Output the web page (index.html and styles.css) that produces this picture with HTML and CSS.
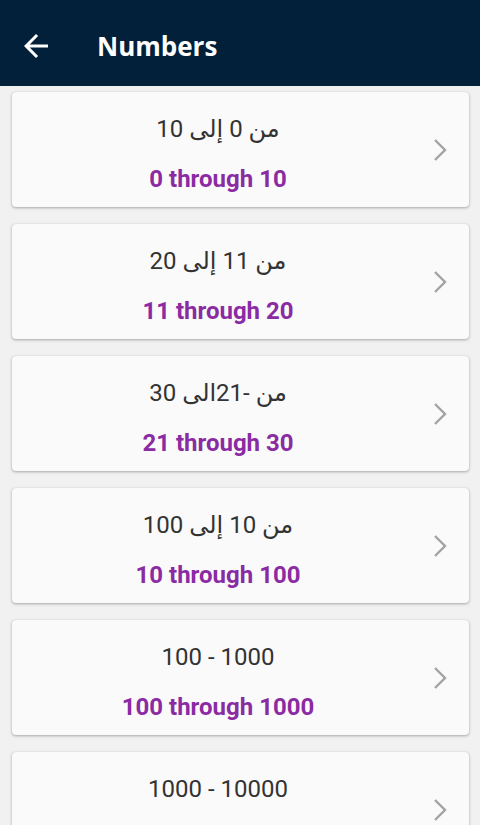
FILE: index.html
```html
<!DOCTYPE html>
<html lang="en">
<head>
  <meta charset="UTF-8">
  <meta name="viewport" content="width=device-width, initial-scale=1.0">
  <title>Numbers</title>
  <link rel="stylesheet" href="styles.css">
</head>
<body>
  <header class="app-bar">
    <svg class="back" width="36" height="36" viewBox="0 0 24 24">
      <path d="M20 11H7.83l5.59-5.59L12 4l-8 8 8 8 1.41-1.41L7.83 13H20v-2z" fill="#fff"/>
    </svg>
    <div class="app-title">Numbers</div>
  </header>

  <div class="list">
    <div class="card">
      <div class="card-text">
        <div class="native" dir="rtl">من 0 إلى 10</div>
        <div class="english">0 through 10</div>
      </div>
      <svg class="chevron" width="16" height="24" viewBox="0 0 16 24"><path d="M3 2l10 10-10 10" fill="none" stroke="#a2a2a2" stroke-width="2.4"/></svg>
    </div>

    <div class="card">
      <div class="card-text">
        <div class="native" dir="rtl">من 11 إلى 20</div>
        <div class="english">11 through 20</div>
      </div>
      <svg class="chevron" width="16" height="24" viewBox="0 0 16 24"><path d="M3 2l10 10-10 10" fill="none" stroke="#a2a2a2" stroke-width="2.4"/></svg>
    </div>

    <div class="card">
      <div class="card-text">
        <div class="native" dir="rtl">من -21الى 30</div>
        <div class="english">21 through 30</div>
      </div>
      <svg class="chevron" width="16" height="24" viewBox="0 0 16 24"><path d="M3 2l10 10-10 10" fill="none" stroke="#a2a2a2" stroke-width="2.4"/></svg>
    </div>

    <div class="card">
      <div class="card-text">
        <div class="native" dir="rtl">من 10 إلى 100</div>
        <div class="english">10 through 100</div>
      </div>
      <svg class="chevron" width="16" height="24" viewBox="0 0 16 24"><path d="M3 2l10 10-10 10" fill="none" stroke="#a2a2a2" stroke-width="2.4"/></svg>
    </div>

    <div class="card">
      <div class="card-text">
        <div class="native">100 - 1000</div>
        <div class="english">100 through 1000</div>
      </div>
      <svg class="chevron" width="16" height="24" viewBox="0 0 16 24"><path d="M3 2l10 10-10 10" fill="none" stroke="#a2a2a2" stroke-width="2.4"/></svg>
    </div>

    <div class="card">
      <div class="card-text">
        <div class="native">1000 - 10000</div>
        <div class="english">1000 through 10000</div>
      </div>
      <svg class="chevron" width="16" height="24" viewBox="0 0 16 24"><path d="M3 2l10 10-10 10" fill="none" stroke="#a2a2a2" stroke-width="2.4"/></svg>
    </div>
  </div>
</body>
</html>
```

FILE: styles.css
```css
body {
  margin: 0;
  font-family: Roboto, "DejaVu Sans", sans-serif;
  background: #f1f1f1;
  overflow: hidden;
}

.app-bar {
  height: 86px;
  background: #03203a;
  display: flex;
  align-items: center;
  padding: 6px 0 0 18px;
  box-sizing: border-box;
}

.back {
  width: 36px;
  height: 36px;
}

.app-title {
  color: #fff;
  font-family: "Open Sans", Roboto, sans-serif;
  font-weight: 700;
  font-size: 26px;
  margin-left: 43px;
}

.list {
  padding: 6px 11px 0 12px;
  display: flex;
  flex-direction: column;
  gap: 17px;
}

.card {
  height: 115px;
  box-sizing: border-box;
  background: #fafafa;
  border-radius: 4px;
  box-shadow: 0 1px 3px rgba(0, 0, 0, 0.3), 0 0 1px rgba(0, 0, 0, 0.15);
  display: flex;
  align-items: center;
}

.card-text {
  flex: 1;
  text-align: center;
  padding: 18px 0 13px;
}

.native {
  font-family: Roboto, "DejaVu Sans", sans-serif;
  font-size: 24px;
  line-height: 38px;
  color: #333;
}

.english {
  margin-top: 16px;
  font-size: 24px;
  line-height: 30px;
  font-weight: 700;
  color: #8b2ba3;
}

.chevron {
  width: 16px;
  height: 24px;
  margin: 0 21px 0 8px;
}
```
